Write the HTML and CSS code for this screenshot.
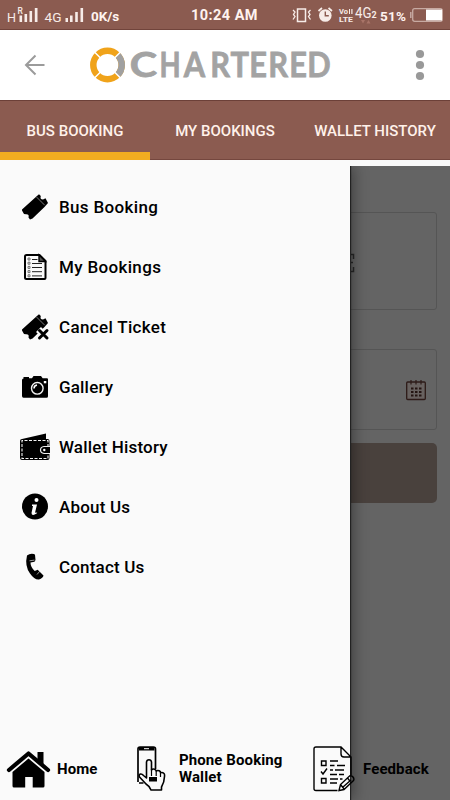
FILE: index.html
```html
<!DOCTYPE html>
<html lang="en">
<head>
<meta charset="utf-8">
<title>Chartered</title>
<link rel="stylesheet" href="styles.css">
</head>
<body>
<div class="app">
  <header class="status">
    <svg class="signals" width="90" height="30" viewBox="0 0 90 30" fill="#f7ece8">
      <text x="7" y="22" font-size="13.500" textLength="9" lengthAdjust="spacingAndGlyphs">H</text>
      <text x="17.500" y="13.500" font-size="8.500" font-weight="500">R</text>
      <path d="M19.500 15.500h2.600V22h-2.600zM24.500 14h2.600v8h-2.600zM29.500 11h2.600v11h-2.600zM34.800 8h2.700v14h-2.700zM65.500 18h2.500v4h-2.500zM70 15.500h2.600V22H70zM75.200 12h2.600v10h-2.600zM80.500 8h2.600v14h-2.600z"/>
      <text x="44.500" y="22" font-size="13.500" textLength="17" lengthAdjust="spacingAndGlyphs">4G</text>
    </svg>
    <span class="speed">0K/s</span>
    <span class="clock">10:24 AM</span>
    <svg class="indicators" width="90" height="30" viewBox="290 0 90 30" fill="#f7ece8">
      <path d="M297.500 9h8v12.500h-8z" fill="none" stroke="#f7ece8" stroke-width="1.500"/>
      <path d="M293 10l2 2-1.500 2.500 1.500 2-2 3M310.500 10l-2 2 1.500 2.500-1.500 2 2 3" fill="none" stroke="#f7ece8" stroke-width="1.300"/>
      <circle cx="325.300" cy="15.500" r="6.300"/>
      <path d="M318.500 11l3.500-3M332 11l-3.500-3" stroke="#f7ece8" stroke-width="1.700"/>
      <path d="M325.300 11.500v4.300h3.500" fill="none" stroke="#8b5b50" stroke-width="1.400"/>
      <text x="339" y="14" font-size="7.500" font-weight="700" textLength="9" lengthAdjust="spacingAndGlyphs">Vo</text>
      <path d="M349 9h1v5h-1zM351.300 9h1.200v5h-1.200z"/>
      <text x="339" y="21.500" font-size="7.500" font-weight="700" textLength="14" lengthAdjust="spacingAndGlyphs">LTE</text>
      <text x="355" y="18" font-size="14" textLength="16.500" lengthAdjust="spacingAndGlyphs">4G</text>
      <text x="371.500" y="18" font-size="9" font-weight="700">2</text>
      <path d="M361 20h4l-2 3.500zM366.500 23.500h4l-2-3.500z" fill="#a87468"/>
    </svg>
    <span class="percent">51%</span>
    <svg class="battery" width="36" height="30" viewBox="409 0 36 30">
      <rect x="412.700" y="8.700" width="29.600" height="12.600" rx="2" fill="none" stroke="#c7aaa2" stroke-width="1.300"/>
      <path d="M426 9.500h16v11h-16z" fill="#fff"/>
      <path d="M410.800 12v6" stroke="#c7aaa2" stroke-width="1.500"/>
    </svg>
  </header>

  <div class="topbar">
    <svg class="back" width="22" height="22" viewBox="0 0 22 22" fill="none" stroke="#9b9b9b" stroke-width="2"><path d="M20.500 11H2M11.500 1.500 2 11l9.500 9.500"/></svg>
    <svg class="logo" width="244" height="40" viewBox="88 45 244 40">
      <g fill="none" stroke-width="6.500">
        <circle cx="107.500" cy="65" r="14.200" stroke="#f0a31a"/>
        <path d="M117.600 55A14.200 14.200 0 0 1 117.600 75" stroke="#a0a0a0"/>
      </g>
      <path d="M94.500 52l6.500 6.500M120.500 52l-6.500 6.500M94.500 78l6.500-6.500M120.500 78l-6.500-6.500" stroke="#fff" stroke-width="1.500"/>
      <text class="wordmark" transform="translate(130.500 0) scale(.88 1)" y="77.500"><tspan x="-.9" textLength="31" lengthAdjust="spacingAndGlyphs">C</tspan><tspan x="33" textLength="24" lengthAdjust="spacingAndGlyphs">H</tspan><tspan x="60.500 90.700 113.600 135 156.600 180.500 200.900">ARTERED</tspan></text>
    </svg>
    <svg class="more" width="10" height="32" viewBox="0 0 10 32" fill="#999"><circle cx="5" cy="5" r="4.100"/><circle cx="5" cy="16" r="4.100"/><circle cx="5" cy="27" r="4.100"/></svg>
  </div>

  <nav class="tabs">
    <a class="tab active">BUS BOOKING</a>
    <a class="tab">MY BOOKINGS</a>
    <a class="tab">WALLET HISTORY</a>
  </nav>

  <main class="stage">
    <section class="form">
      <div class="card route">
        <svg width="7" height="20" viewBox="0 0 7 20" fill="none" stroke="#292929" stroke-width="1.500"><path d="M0 1.500h5.500V6M1 9.500h4M0 18.500h5.500V14"/></svg>
      </div>
      <div class="card date">
        <svg width="22" height="22" viewBox="0 0 22 22">
          <rect x="1.700" y="3" width="18.600" height="17.500" rx="1" fill="#686260" stroke="#2d1b18" stroke-width="1.300"/>
          <path d="M6 1v4.500M11 1v4.500M16 1v4.500" stroke="#2d1b18" stroke-width="1.200"/>
          <path d="M6 9.500h10.500M6 13h10.500M6 16.500h10.500" stroke="#241512" stroke-width="2" stroke-dasharray="2.500 1.500"/>
        </svg>
      </div>
      <div class="search"></div>
    </section>

    <aside class="drawer">
      <a class="item"><svg viewBox="0 0 32 32"><g id="ticket"><path d="M2 18.500 17.500 4.500 19 3.200 20.800 5Q19.700 8.500 23 8.500L25.500 7.300 28 12 24.500 16 12.500 27.500 10 28.500 8.500 26.500Q9.500 23 6 23.200L4 23 2 19.500z"/><path d="M17 6.500l8 8" stroke="#fafafa" stroke-width=".9" stroke-dasharray="1.500 1.300"/></g></svg><span class="wide">Bus Booking</span></a>
      <a class="item"><svg viewBox="0 0 32 32"><path d="M6.500 4h13l6 6v17q0 1-1 1h-18Q5 28 5 26.500v-21Q5 4 6.500 4z" fill="none" stroke="#000" stroke-width="2"/><path d="M19 4v6.500h6.500z" fill="#555" stroke="#000" stroke-width="1.400"/><path d="M12 8.500h5.500M12 12.500h10M12 16.500h10M12 20.700h10M12 24.900h10" stroke="#222" stroke-width="1"/><path d="M8 7h2v2H8zM8 11.200h2v2H8zM8 15.400h2v2H8zM8 19.600h2v2H8zM8 23.800h2v2H8z" fill="none" stroke="#555" stroke-width=".8"/></svg><span class="wide">My Bookings</span></a>
      <a class="item"><svg viewBox="0 0 32 32"><use href="#ticket"/><path d="M18.500 18.500l9.500 9.500M28 18.500 18.500 28" stroke="#fafafa" stroke-width="7"/><path d="M19.500 19.500l7.500 7.500M27 19.500l-7.500 7.500" stroke="#000" stroke-width="3" stroke-linecap="round"/></svg><span class="wide">Cancel Ticket</span></a>
      <a class="item"><svg viewBox="0 0 32 32"><path d="M2 9q0-1.500 1.500-1.500V6H9v1.200h3L13.500 5h7.500l1.700 2.200H27q1 0 1 1v17q0 1.500-1.500 1.500h-23Q2 26.700 2 25z"/><circle cx="17.300" cy="17.300" r="5.800" fill="none" stroke="#f5f5f5" stroke-width="1.400"/><path d="M14 17.500q0-3 3-3.500" fill="none" stroke="#fff" stroke-width="1.500"/><path d="M23.800 10h2.500v2.300h-2.500z" fill="#fff"/></svg><span>Gallery</span></a>
      <a class="item"><svg viewBox="0 0 32 32"><path d="M2 8 26 2.500V8h1.500q2 0 2 2v5.500h.5v7h-.5V27q0 2-2 2H2q-2 0-2-2V10q0-2 2-2z"/><path d="M28 16V9.500H2v18h26V23" fill="none" stroke="#f5f5f5" stroke-width="1.100" stroke-dasharray="3 1.500"/><path d="M30 15.500h-6q-3.500.5-3.500 3.500t3.500 3.500h6" fill="#000" stroke="#eee" stroke-width="1.200"/><circle cx="24.300" cy="19" r="1.200" fill="#fff"/></svg><span>Wallet History</span></a>
      <a class="item"><svg viewBox="0 0 32 32"><circle cx="15" cy="15.500" r="13"/><circle cx="16.500" cy="9" r="2" fill="#fff"/><path d="M12 13.500h5L15.200 21q-.2 1.300 2 .2l-.5 1.300q-5 3-5.200-.5l1.500-7H12z" fill="#fff"/></svg><span>About Us</span></a>
      <a class="item"><svg viewBox="0 0 32 32"><path d="M7 4.500Q10 2 14 3l1 .8.500 5.200-1 1.800-4 .7q0 4.500 4.200 8.500l3-1.300 5.800 5.800q-.5 2.700-4.500 4-4.500.5-9-6Q4.500 15 7 4.500z"/><path d="M9.500 9.800l5-.7M17 23.500l3-3.500" stroke="#bbb" stroke-width=".8"/></svg><span>Contact Us</span></a>
    </aside>

    <footer class="bottom">
      <a class="link home">
        <svg width="46" height="40" viewBox="0 0 46 40"><path d="M3 21 22.500 4.500 42 21" fill="none" stroke="#000" stroke-width="4.200" stroke-linecap="round" stroke-linejoin="round"/><path d="M31.500 3h6v13l-6-5zM22.500 9.500 38.500 23v14q0 1.500-1.500 1.500H26.700V28h-7.500v10.500H8q-1.500 0-1.500-1.500V23z"/></svg>
        <span>Home</span>
      </a>
      <a class="link phone">
        <svg width="32" height="48" viewBox="0 0 32 48"><path d="M3 37V4q0-2 2-2h13.500q2 0 2 2v20M8.500 38H4" fill="none" stroke="#000" stroke-width="1.700"/><path d="M4 2h15.500v3.500H4z"/><path d="M9 3.700h5" stroke="#fff" stroke-width="1"/><path d="M11.500 33V17q.3-2.300 2.500-2.300t2.500 2.300v8q1-1.300 3-.8 1.500.4 1.700 1.800 1.300-1 3-.2 1.300.6 1.300 2 2-.7 3.500.7.800.8.500 3-.2 6-3 10.500v3H16q-1.500-4-5-6l-6.500-7q-1-2.500 1-3 1.500-.3 3 1.500z" fill="#fafafa" stroke="#000" stroke-width="1.600" stroke-linejoin="round"/><path d="M16.500 24v7M21.200 26v5M25.500 28v4" stroke="#000" stroke-width="1.200"/><path d="M14 32h8v4.500h-8z"/></svg>
        <span>Phone Booking<br>Wallet</span>
      </a>
      <a class="link feedback">
        <svg width="44" height="48" viewBox="0 0 44 48" fill="none" stroke="#000" stroke-width="1.400"><path d="M26.500 45.500H5Q3 45.500 3 43.500V4q0-2 2-2h25l10 10v18M30 2v7q0 3 3 3h7"/><path d="M10.500 16H15v4.500h-4.500zM10.500 33.500H15V38h-4.500zM10 26.500l2 2.500 4-5.500" stroke-width="1.400"/><path d="M19 16h8M19 20.500h4.500M26 20.500h8M19 25h3M24 25h9M19 29.500h7M28 29.500h5M19 34h8M29 34h2.500M19 38h7" stroke-width="1.300"/><path d="M28 45.500l1.500-6L38.500 31q2-1 3.500 1t.5 3.500l-9.500 9zM29.500 39.500l4 5M36.500 33l4 5M32 42l8-7"/></svg>
        <span>Feedback</span>
      </a>
    </footer>
  </main>
</div>
</body>
</html>
```
FILE: styles.css
```css
* { box-sizing: border-box; }
body { margin: 0; font-family: Roboto, "Liberation Sans", sans-serif; }
svg { display: block; flex: none; }
.app { width: 450px; height: 800px; display: flex; flex-direction: column; overflow: hidden; background: #fafafa; }
.status { height: 30px; flex: none; display: flex; background: #8b5b50; border-bottom: 1px solid #71443b; color: #fff3ef; font-weight: 700; line-height: 32px; white-space: nowrap; }
.signals, .indicators { font-weight: 400; }
.speed { width: 101px; padding-left: 1px; font-size: 13.5px; }
.clock { width: 99px; font-size: 14.5px; letter-spacing: .45px; }
.percent { width: 29px; font-size: 13.5px; letter-spacing: .2px; }
.topbar { height: 70px; flex: none; display: flex; align-items: center; background: #fff; }
.back { margin: 0 42px 0 24px; }
.logo { overflow: visible; }
.more { margin-left: 83px; }
.wordmark { font-family: Lato, sans-serif; font-size: 35px; font-weight: 700; fill: #a3a3a3; stroke: #a3a3a3; stroke-width: .8px; }
.tabs { height: 60px; flex: none; display: grid; grid-template-columns: repeat(3, 1fr); background: #8b5b50; border-top: 1px solid #6c4038; border-bottom: 1px solid #75473e; }
.tab { display: flex; align-items: center; justify-content: center; color: #fff1ea; font-size: 15px; font-weight: 500; white-space: nowrap; padding-top: 1px; }
.active { border-bottom: 8px solid #f2ad21; padding-top: 9px; margin-bottom: -1px; }
.stage { position: relative; flex: 1; margin-top: 6px; background: #646464; overflow: hidden; }
.form { padding: 46px 13px 0 12px; }
.card { border: 1px solid #555; border-radius: 3px; display: flex; align-items: center; }
.route { height: 98px; padding-left: 335px; padding-top: 4px; }
.date { height: 81px; margin-top: 39px; justify-content: flex-end; padding-right: 9px; }
.search { height: 60px; margin-top: 13px; border-radius: 5px; background: #49413d; }
.drawer { position: absolute; left: 0; top: 0; bottom: 0; width: 350px; padding: 11px 0 0 20px; background: #fafafa; box-shadow: 1px 0 1px #222, 3px 0 14px rgba(0, 0, 0, .4); }
.item { height: 60px; display: flex; align-items: center; gap: 7px; font-size: 17px; font-weight: 500; letter-spacing: .18px; color: #000; white-space: nowrap; }
.wide { letter-spacing: .34px; }
.item svg { width: 32px; height: 32px; }
.bottom { position: absolute; left: 0; right: 0; bottom: 0; height: 62px; display: flex; align-items: center; font-size: 15px; font-weight: 700; line-height: 17px; letter-spacing: .1px; color: #000; white-space: nowrap; }
.link { display: flex; align-items: center; }
.home { width: 135px; padding-left: 6px; gap: 5px; }
.phone { width: 176px; gap: 12px; }
.feedback { gap: 8px; }
```
